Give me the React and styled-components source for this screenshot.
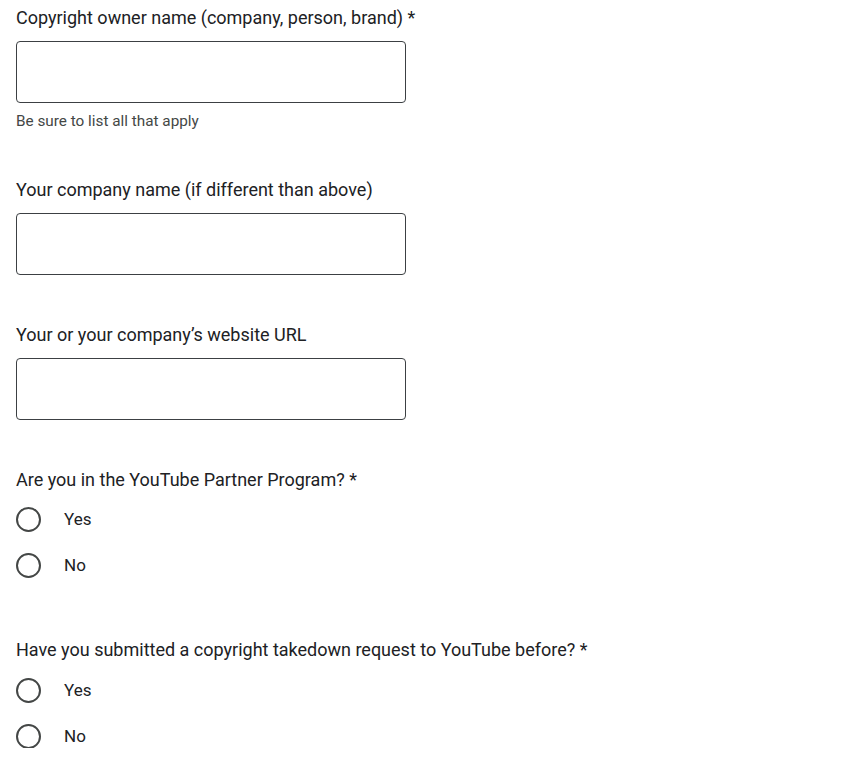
import React from 'react';
import styled, { createGlobalStyle } from 'styled-components';

const GlobalStyle = createGlobalStyle`
  body {
    margin: 0;
    background: #ffffff;
    font-family: Roboto, "Liberation Sans", Arial, sans-serif;
    color: #202124;
  }
`;

const Form = styled.div`
  display: flex;
  flex-direction: column;
  padding: 6px 16px 0 16px;
`;

const Question = styled.div`
  display: flex;
  flex-direction: column;
  margin-bottom: ${p => p.$gap || 0}px;
`;

const Label = styled.div`
  font-size: 18px;
  line-height: 24px;
  color: #202124;
`;

const TextBox = styled.input`
  box-sizing: border-box;
  width: 390px;
  height: 62px;
  margin-top: 11px;
  border: 1px solid #3c4043;
  border-radius: 4px;
  background: #fff;
  outline: none;
`;

const Hint = styled.div`
  font-size: 15.3px;
  line-height: 20px;
  color: #444746;
  margin-top: 8px;
`;

const Options = styled.div`
  display: flex;
  flex-direction: column;
  gap: 22px;
  margin-top: ${p => p.$top || 16}px;
`;

const Option = styled.label`
  display: flex;
  align-items: center;
  height: 24px;
  font-size: 17px;
  color: #202124;
`;

const Circle = styled.span`
  box-sizing: border-box;
  width: 25px;
  height: 25px;
  border: 2px solid #444746;
  border-radius: 50%;
  margin-right: 23px;
`;

const Radio = ({ label }) => (
  <Option>
    <Circle />
    {label}
  </Option>
);

export default function App() {
  return (
    <>
      <GlobalStyle />
      <Form>
        <Question $gap={47}>
          <Label>Copyright owner name (company, person, brand) *</Label>
          <TextBox />
          <Hint>Be sure to list all that apply</Hint>
        </Question>
        <Question $gap={48}>
          <Label>Your company name (if different than above)</Label>
          <TextBox />
        </Question>
        <Question $gap={48}>
          <Label>Your or your company’s website URL</Label>
          <TextBox />
        </Question>
        <Question $gap={61}>
          <Label>Are you in the YouTube Partner Program? *</Label>
          <Options $top={15}>
            <Radio label="Yes" />
            <Radio label="No" />
          </Options>
        </Question>
        <Question>
          <Label>Have you submitted a copyright takedown request to YouTube before? *</Label>
          <Options $top={16}>
            <Radio label="Yes" />
            <Radio label="No" />
          </Options>
        </Question>
      </Form>
    </>
  );
}
